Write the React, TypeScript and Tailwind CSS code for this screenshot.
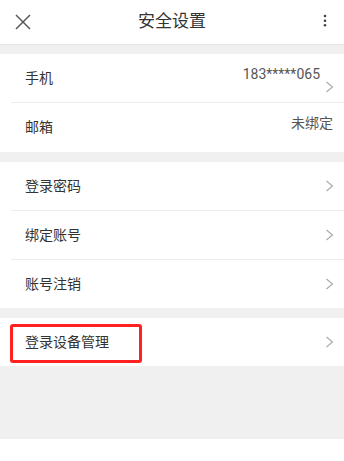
import React from "react";

const Chevron = ({ className = "" }: { className?: string }) => (
  <svg width="9" height="12" viewBox="0 0 9 12" className={className}>
    <polyline points="1.5,1 7.5,6 1.5,11" fill="none" stroke="#a8a8a8" strokeWidth="1.1" />
  </svg>
);

const Row = ({
  label,
  children,
  border = false,
  h = "h-[48px]",
}: {
  label: string;
  children?: React.ReactNode;
  border?: boolean;
  h?: string;
}) => (
  <div>
    {border && <div className="ml-[11px] h-px bg-[#ececec]" />}
    <div className={`relative flex items-center justify-between pl-[25px] pr-[10px] ${h}`}>
      <span className="text-[14px] text-[#333]">{label}</span>
      {children}
    </div>
  </div>
);

export default function App() {
  return (
    <div
      className="w-full min-h-[461px] bg-white"
      style={{ fontFamily: '"Roboto", "Noto Sans CJK SC", sans-serif' }}
    >
      <div className="relative flex h-[44px] items-center justify-center">
        <svg width="16" height="16" viewBox="0 0 16 16" className="absolute left-[15px] top-[13.5px]">
          <line x1="1" y1="1" x2="15" y2="15" stroke="#555" strokeWidth="1.4" />
          <line x1="15" y1="1" x2="1" y2="15" stroke="#555" strokeWidth="1.4" />
        </svg>
        <span className="text-[17px] text-[#333]">安全设置</span>
        <svg width="6" height="14" viewBox="0 0 6 14" className="absolute left-[321.5px] top-[14px]">
          <circle cx="3" cy="2" r="1.3" fill="#444" />
          <circle cx="3" cy="6.7" r="1.3" fill="#444" />
          <circle cx="3" cy="11.3" r="1.3" fill="#444" />
        </svg>
      </div>
      <div className="h-[10px] border-t border-[#e6e6e6] bg-[#f0f0f0]" />
      <div>
        <Row label="手机">
          <div className="flex items-center">
            <span className="mb-[8px] text-[14px] text-[#555]">183*****065</span>
            <Chevron className="ml-[5px] mt-[18px]" />
          </div>
        </Row>
        <Row label="邮箱" border h="h-[49px]">
          <span className="mb-[8px] mr-[1px] text-[14px] text-[#555]">未绑定</span>
        </Row>
      </div>
      <div className="h-[10px] bg-[#f0f0f0]" />
      <div>
        <Row label="登录密码">
          <Chevron />
        </Row>
        <Row label="绑定账号" border>
          <Chevron />
        </Row>
        <Row label="账号注销" border>
          <Chevron />
        </Row>
      </div>
      <div className="h-[10px] bg-[#f0f0f0]" />
      <div className="relative">
        <Row label="登录设备管理">
          <Chevron />
        </Row>
        <div className="pointer-events-none absolute left-[10px] top-[6px] h-[39px] w-[132px] rounded-[3px] border-[3px] border-[#ff2020]" />
      </div>
      <div className="h-[73px] bg-[#f0f0f0]" />
    </div>
  );
}
